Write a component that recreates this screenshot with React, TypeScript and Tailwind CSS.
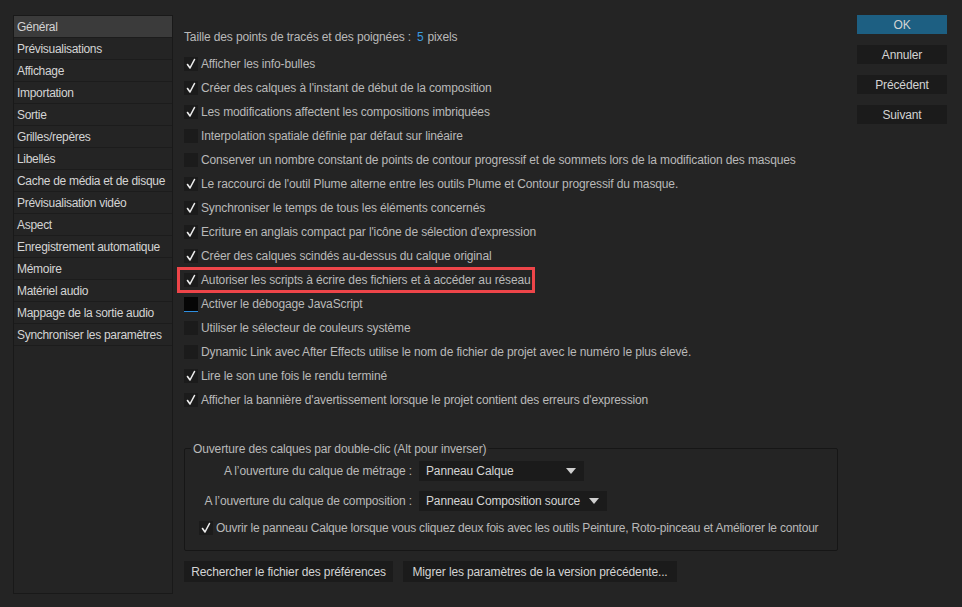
import React from "react";

const font = { fontFamily: '"Liberation Sans", Arial, sans-serif', letterSpacing: "-0.13px" };

const sidebar = [
  "Général",
  "Prévisualisations",
  "Affichage",
  "Importation",
  "Sortie",
  "Grilles/repères",
  "Libellés",
  "Cache de média et de disque",
  "Prévisualisation vidéo",
  "Aspect",
  "Enregistrement automatique",
  "Mémoire",
  "Matériel audio",
  "Mappage de la sortie audio",
  "Synchroniser les paramètres",
];

const rows: { label: string; checked: boolean; focus?: boolean }[] = [
  { label: "Afficher les info-bulles", checked: true },
  { label: "Créer des calques à l'instant de début de la composition", checked: true },
  { label: "Les modifications affectent les compositions imbriquées", checked: true },
  { label: "Interpolation spatiale définie par défaut sur linéaire", checked: false },
  { label: "Conserver un nombre constant de points de contour progressif et de sommets lors de la modification des masques", checked: false },
  { label: "Le raccourci de l'outil Plume alterne entre les outils Plume et Contour progressif du masque.", checked: true },
  { label: "Synchroniser le temps de tous les éléments concernés", checked: true },
  { label: "Ecriture en anglais compact par l'icône de sélection d'expression", checked: true },
  { label: "Créer des calques scindés au-dessus du calque original", checked: true },
  { label: "Autoriser les scripts à écrire des fichiers et à accéder au réseau", checked: true },
  { label: "Activer le débogage JavaScript", checked: false, focus: true },
  { label: "Utiliser le sélecteur de couleurs système", checked: false },
  { label: "Dynamic Link avec After Effects utilise le nom de fichier de projet avec le numéro le plus élevé.", checked: false },
  { label: "Lire le son une fois le rendu terminé", checked: true },
  { label: "Afficher la bannière d'avertissement lorsque le projet contient des erreurs d'expression", checked: true },
];

function Check() {
  return (
    <svg width="14" height="14" viewBox="0 0 14 14" className="block">
      <path d="M3.5 7.5 L6 11 L10.5 2.5" fill="none" stroke="#ececec" strokeWidth="1.6" strokeLinecap="round" strokeLinejoin="round" />
    </svg>
  );
}

function Box({ checked, focus }: { checked: boolean; focus?: boolean }) {
  return (
    <div className="relative w-[14px] h-[14px] shrink-0">
      <div className={focus ? "w-[14px] h-[14px] bg-[#060606]" : "w-[14px] h-[14px] bg-[#1b1b1b]"}>
        {checked && <Check />}
      </div>
      {focus && <div className="absolute left-0 top-[14px] w-[14px] h-[1px] bg-[#2f8fe0]" />}
    </div>
  );
}

function Caret() {
  return (
    <svg width="10" height="6" viewBox="0 0 10 6" className="block">
      <path d="M0 0 H10 L5 6 Z" fill="#cfcfcf" />
    </svg>
  );
}

export default function App() {
  return (
    <div className="w-[962px] h-[607px] bg-[#242424] flex pt-[15px] pl-[13px] text-[12px]" style={font}>
      <div className="w-[160px] h-[579px] border border-[#191919] flex flex-col shrink-0">
        {sidebar.map((s, i) => (
          <div
            key={s}
            className={
              "h-[22px] flex items-center pl-[3px] border-b border-[#1c1c1c] text-[#d4d4d4] whitespace-nowrap tracking-[-0.3px] " +
              (i === 0 ? "bg-[#3b3b3b]" : "")
            }
          >
            {s}
          </div>
        ))}
      </div>

      <div className="relative ml-[11px] w-[654px] flex flex-col pt-[10px] text-[#b9b9b9]">
        <div className="h-[24px] flex items-center">
          Taille des points de tracés et des poignées :<span className="ml-[6px] text-[#3a9be0]">5</span>
          <span className="ml-[4px]">pixels</span>
        </div>
        <div className="mt-[3px] flex flex-col">
          {rows.map((r) => (
            <div key={r.label} className="h-[24px] flex items-center gap-[3px]">
              <Box checked={r.checked} focus={r.focus} />
              <span className="whitespace-nowrap">{r.label}</span>
            </div>
          ))}
        </div>

        <div className="absolute left-[-7px] top-[252px] w-[358px] h-[26px] border-[3px] border-[#ee4549]" />

        <div className="relative mt-[36px] h-[103px] border border-[#161616] rounded-[2px] pt-[12px]">
          <div className="absolute left-[6px] top-[-9px] bg-[#242424] px-[2px] text-[#b9b9b9]">
            Ouverture des calques par double-clic (Alt pour inverser)
          </div>
          <div className="flex items-center h-[20px]">
            <div className="w-[234px] text-right pr-[7px] whitespace-nowrap">A l’ouverture du calque de métrage :</div>
            <div className="w-[165px] h-[20px] bg-[#1b1b1b] flex items-center justify-between pl-[7px] pr-[8px] text-[#d4d4d4]">
              <span>Panneau Calque</span>
              <Caret />
            </div>
          </div>
          <div className="flex items-center h-[20px] mt-[10px]">
            <div className="w-[234px] text-right pr-[7px] whitespace-nowrap">A l’ouverture du calque de composition :</div>
            <div className="w-[188px] h-[20px] bg-[#1b1b1b] flex items-center justify-between pl-[7px] pr-[8px] text-[#d4d4d4]">
              <span>Panneau Composition source</span>
              <Caret />
            </div>
          </div>
          <div className="flex items-center gap-[3px] mt-[7px] pl-[14px] h-[20px]">
            <Box checked />
            <span className="whitespace-nowrap tracking-[-0.22px]">
              Ouvrir le panneau Calque lorsque vous cliquez deux fois avec les outils Peinture, Roto-pinceau et Améliorer le contour
            </span>
          </div>
        </div>

        <div className="flex gap-[10px] mt-[10px]">
          <div className="w-[209px] h-[21px] bg-[#1b1b1b] flex items-center justify-center text-[#d4d4d4]">
            Rechercher le fichier des préférences
          </div>
          <div className="w-[274px] h-[21px] bg-[#1b1b1b] flex items-center justify-center text-[#d4d4d4]">
            Migrer les paramètres de la version précédente...
          </div>
        </div>
      </div>

      <div className="ml-[19px] w-[90px] flex flex-col gap-[11px] text-[#d4d4d4]">
        <div className="h-[19px] bg-[#1d5f82] flex items-center justify-center">OK</div>
        <div className="h-[19px] bg-[#1b1b1b] flex items-center justify-center">Annuler</div>
        <div className="h-[19px] bg-[#1b1b1b] flex items-center justify-center">Précédent</div>
        <div className="h-[19px] bg-[#1b1b1b] flex items-center justify-center">Suivant</div>
      </div>
    </div>
  );
}
